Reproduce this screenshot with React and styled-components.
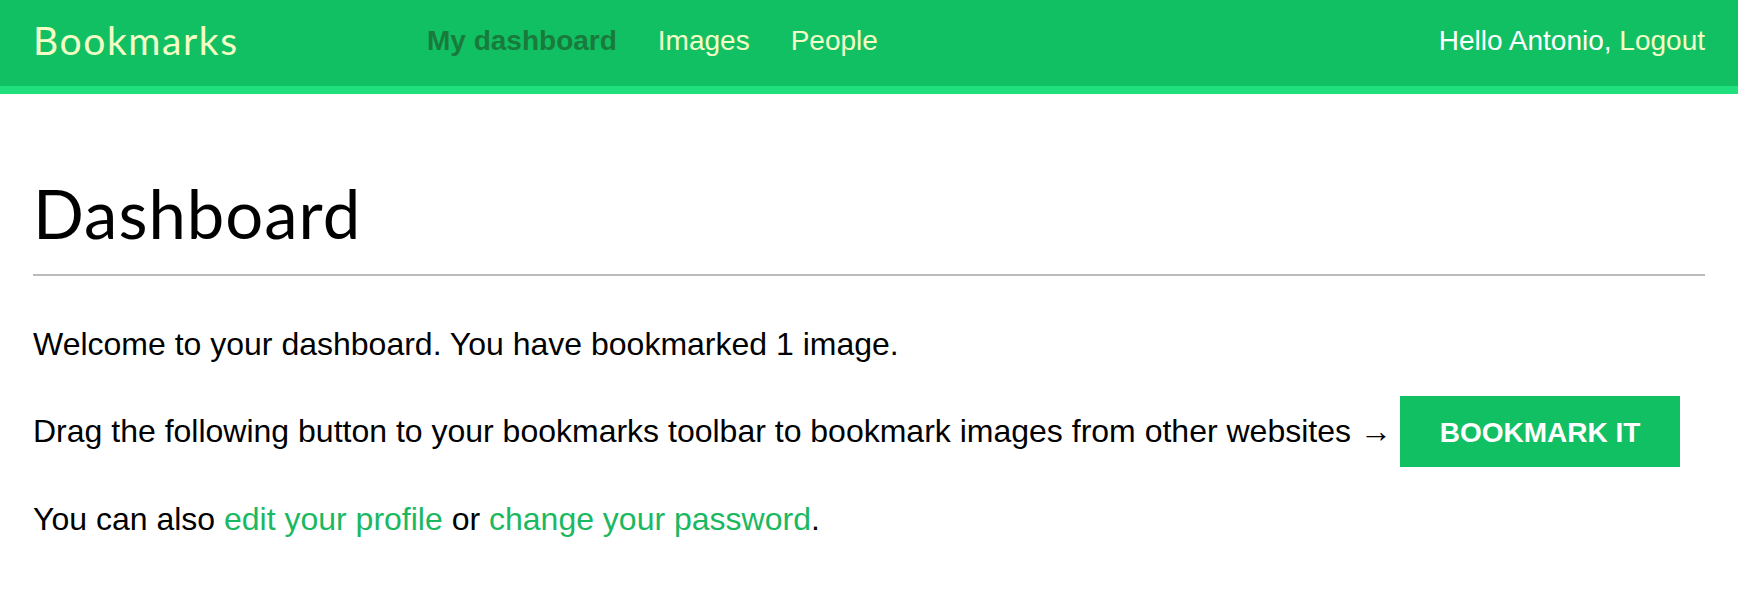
import React from 'react';
import styled, { createGlobalStyle } from 'styled-components';

const GlobalStyle = createGlobalStyle`
  body {
    margin: 0;
    background: #fff;
    color: #000;
    font-family: "Liberation Sans", Arial, sans-serif;
  }
`;

const Header = styled.header`
  display: flex;
  align-items: center;
  height: 82px;
  padding: 0 33px 4px;
  background: #12c064;
  border-bottom: 8px solid #1fe07c;
`;

const Logo = styled.a`
  width: 394px;
  flex-shrink: 0;
  margin-bottom: 2px;
  font-family: Lato, "Open Sans", sans-serif;
  font-size: 39px;
  letter-spacing: 1.6px;
  color: #f3fec6;
  text-decoration: none;
`;

const Nav = styled.nav`
  display: flex;
  gap: 41px;
  flex: 1;
`;

const NavLink = styled.a`
  font-size: 28px;
  font-weight: ${p => (p.$active ? 700 : 400)};
  color: ${p => (p.$active ? '#187b3b' : '#f3fec6')};
  text-decoration: none;
`;

const UserBox = styled.div`
  font-size: 28px;
  color: #fff;
  a {
    color: #f3fec6;
    text-decoration: none;
  }
`;

const Main = styled.main`
  padding: 80px 33px 0;
`;

const Title = styled.h1`
  margin: 0;
  font-family: Lato, "Open Sans", sans-serif;
  font-weight: 400;
  font-size: 67px;
  line-height: 78px;
  letter-spacing: 1px;
`;

const Rule = styled.hr`
  margin: 22px 0 0;
  border: 0;
  height: 2px;
  background: #bbb;
`;

const Para = styled.p`
  margin: ${p => (p.$first ? '48px' : '32px')} 0 0;
  font-size: 32px;
  line-height: 40px;
`;

const GreenLink = styled.a`
  color: #1bb862;
  text-decoration: none;
`;

const BookmarkButton = styled.a`
  display: inline-block;
  margin-left: -1px;
  padding: 21px 40px 19px;
  line-height: 31px;
  background: #12c064;
  color: #fff;
  font-weight: 700;
  font-size: 28px;
  text-decoration: none;
`;

export default function App() {
  return (
    <>
      <GlobalStyle />
      <Header>
        <Logo href="#">Bookmarks</Logo>
        <Nav>
          <NavLink href="#" $active>My dashboard</NavLink>
          <NavLink href="#">Images</NavLink>
          <NavLink href="#">People</NavLink>
        </Nav>
        <UserBox>
          Hello Antonio, <a href="#">Logout</a>
        </UserBox>
      </Header>
      <Main>
        <Title>Dashboard</Title>
        <Rule />
        <Para $first>Welcome to your dashboard. You have bookmarked 1 image.</Para>
        <Para>
          Drag the following button to your bookmarks toolbar to bookmark images from other websites →{' '}
          <BookmarkButton href="#">BOOKMARK IT</BookmarkButton>
        </Para>
        <Para>
          You can also <GreenLink href="#">edit your profile</GreenLink> or{' '}
          <GreenLink href="#">change your password</GreenLink>.
        </Para>
      </Main>
    </>
  );
}
